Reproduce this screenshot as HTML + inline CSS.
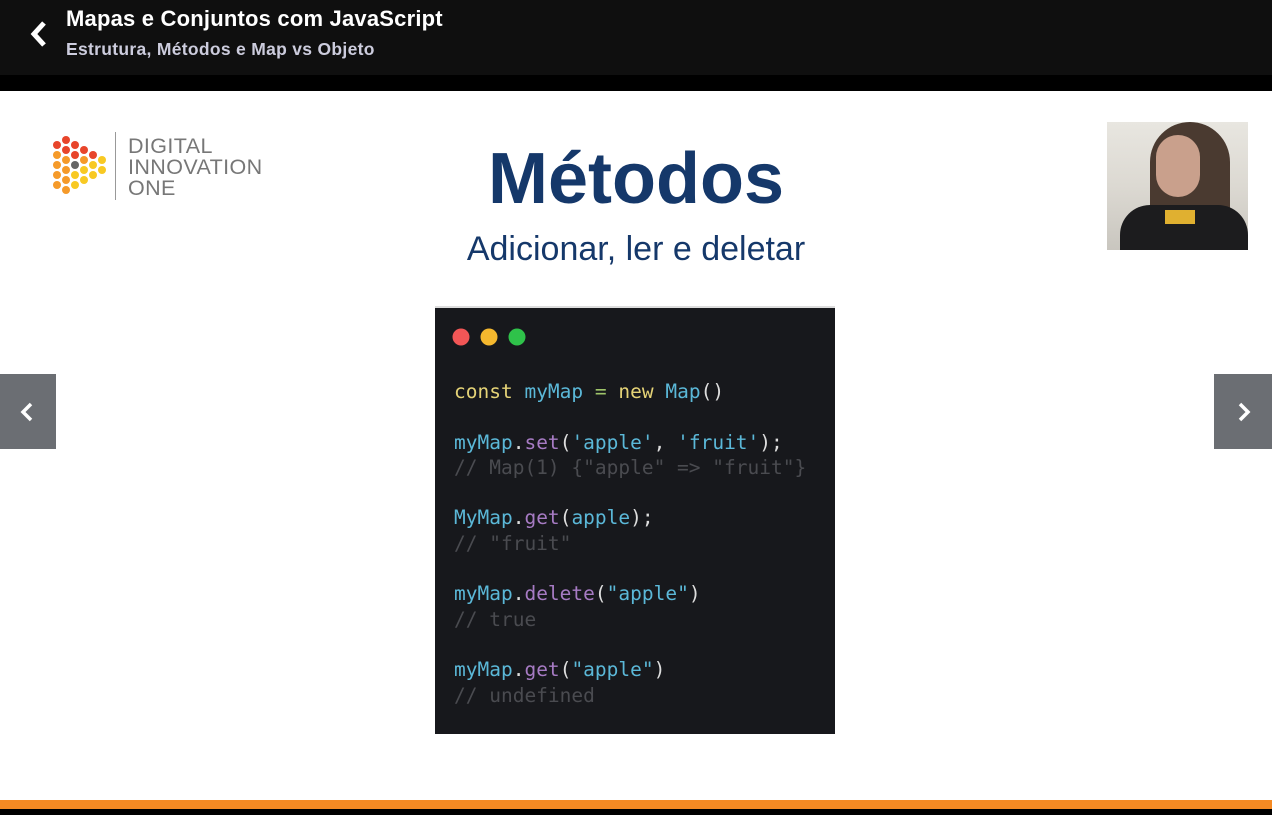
<!DOCTYPE html>
<html><head><meta charset="utf-8"><style>
*{margin:0;padding:0;box-sizing:border-box}
body{width:1272px;height:815px;overflow:hidden;background:#fff;font-family:"Liberation Sans",sans-serif;position:relative}
.hdr{position:absolute;left:0;top:0;width:1272px;height:75px;background:#0f0f0f}
.hdr2{position:absolute;left:0;top:75px;width:1272px;height:16px;background:#000}
.t1{position:absolute;left:66px;top:6px;color:#fff;font-weight:bold;font-size:22px;letter-spacing:0.2px}
.t2{position:absolute;left:66px;top:39px;color:#ccd;font-weight:bold;font-size:17.5px;letter-spacing:0.3px}
.abs{position:absolute}
.title{position:absolute;left:0;width:1272px;text-align:center;color:#15386a}
.code{position:absolute;left:435px;top:306px;width:400px;height:428px;background:#17181c;border-top:2px solid #ddd}
.code pre{position:absolute;left:19px;top:71px;font-family:"DejaVu Sans Mono",monospace;font-size:19.5px;line-height:25.3px;color:#ddd}
.y{color:#e5d377}.b{color:#5bb8d8}.p{color:#a77bc4}.g{color:#9fc46a}.c{color:#4a4b50}.w{color:#ddd}
.nav{position:absolute;top:374px;width:56px;height:75px;background:#6b6e73}
.or{position:absolute;left:0;top:800px;width:1272px;height:9px;background:#f58a23}
.bk{position:absolute;left:0;top:809px;width:1272px;height:6px;background:#000}
</style></head><body>
<div class="hdr"></div><div class="hdr2"></div>
<svg class="abs" style="left:28px;top:20px" width="22" height="28" viewBox="0 0 22 28"><path d="M16 3 L6 14 L16 25" fill="none" stroke="#fff" stroke-width="5"/></svg>
<div class="t1">Mapas e Conjuntos com JavaScript</div>
<div class="t2">Estrutura, Métodos e Map vs Objeto</div>

<svg class="abs" style="left:52px;top:136px" width="56" height="62" viewBox="0 0 56 62">
<g fill="#e8452b"><circle cx="14" cy="4" r="4"/><circle cx="5" cy="9" r="4"/><circle cx="23" cy="9" r="4"/><circle cx="14" cy="14" r="4"/><circle cx="32" cy="14" r="4"/><circle cx="23" cy="19" r="4"/><circle cx="41" cy="19" r="4"/></g>
<g fill="#f59a2a"><circle cx="5" cy="19" r="4"/><circle cx="14" cy="24" r="4"/><circle cx="5" cy="29" r="4"/><circle cx="5" cy="39" r="4"/><circle cx="14" cy="34" r="4"/><circle cx="14" cy="44" r="4"/><circle cx="5" cy="49" r="4"/><circle cx="14" cy="54" r="4"/><circle cx="32" cy="24" r="4"/></g>
<circle cx="23" cy="29" r="4" fill="#666"/>
<g fill="#f8c923"><circle cx="41" cy="29" r="4"/><circle cx="50" cy="24" r="4"/><circle cx="50" cy="34" r="4"/><circle cx="32" cy="34" r="4"/><circle cx="23" cy="39" r="4"/><circle cx="41" cy="39" r="4"/><circle cx="32" cy="44" r="4"/><circle cx="23" cy="49" r="4"/></g>
</svg>
<div class="abs" style="left:115px;top:132px;width:1px;height:68px;background:#999"></div>
<div class="abs" style="left:128px;top:136px;color:#777;font-size:21.5px;line-height:21px;letter-spacing:0.4px">DIGITAL<br>INNOVATION<br>ONE</div>

<div class="title" style="top:138px;font-size:72px;font-weight:bold">Métodos</div>
<div class="title" style="top:230px;font-size:34px">Adicionar, ler e deletar</div>

<div class="abs" style="left:1107px;top:122px;width:141px;height:128px;background:linear-gradient(#e8e6e0 0,#dcd9d2 50%,#c9c6bf 100%)"></div>
<div class="abs" style="left:1150px;top:122px;width:80px;height:115px;border-radius:40px 40px 10px 10px;background:#4a3a30"></div>
<div class="abs" style="left:1156px;top:135px;width:44px;height:62px;border-radius:22px;background:#c9a08c"></div>
<div class="abs" style="left:1120px;top:205px;width:128px;height:45px;border-radius:30px 30px 0 0;background:#1c1c1e"></div>
<div class="abs" style="left:1165px;top:210px;width:30px;height:14px;background:#e0b030"></div>

<div class="code">
<svg class="abs" style="left:17px;top:20px" width="80" height="18"><circle cx="9" cy="9" r="8.5" fill="#f25656"/><circle cx="37" cy="9" r="8.5" fill="#f5b82e"/><circle cx="65" cy="9" r="8.5" fill="#2fc24a"/></svg>
<pre><span class="y">const</span> <span class="b">myMap</span> <span class="g">=</span> <span class="y">new</span> <span class="b">Map</span>()

<span class="b">myMap</span>.<span class="p">set</span>(<span class="b">'apple'</span>, <span class="b">'fruit'</span>);
<span class="c">// Map(1) {"apple" =&gt; "fruit"}</span>

<span class="b">MyMap</span>.<span class="p">get</span>(<span class="b">apple</span>);
<span class="c">// "fruit"</span>

<span class="b">myMap</span>.<span class="p">delete</span>(<span class="b">"apple"</span>)
<span class="c">// true</span>

<span class="b">myMap</span>.<span class="p">get</span>(<span class="b">"apple"</span>)
<span class="c">// undefined</span></pre>
</div>

<div class="nav" style="left:0"><svg style="position:absolute;left:19px;top:28px" width="16" height="20"><path d="M12 2 L4 10 L12 18" fill="none" stroke="#fff" stroke-width="3.5"/></svg></div>
<div class="nav" style="left:1214px;width:58px"><svg style="position:absolute;left:22px;top:28px" width="16" height="20"><path d="M4 2 L12 10 L4 18" fill="none" stroke="#fff" stroke-width="3.5"/></svg></div>
<div class="or"></div><div class="bk"></div>
</body></html>
